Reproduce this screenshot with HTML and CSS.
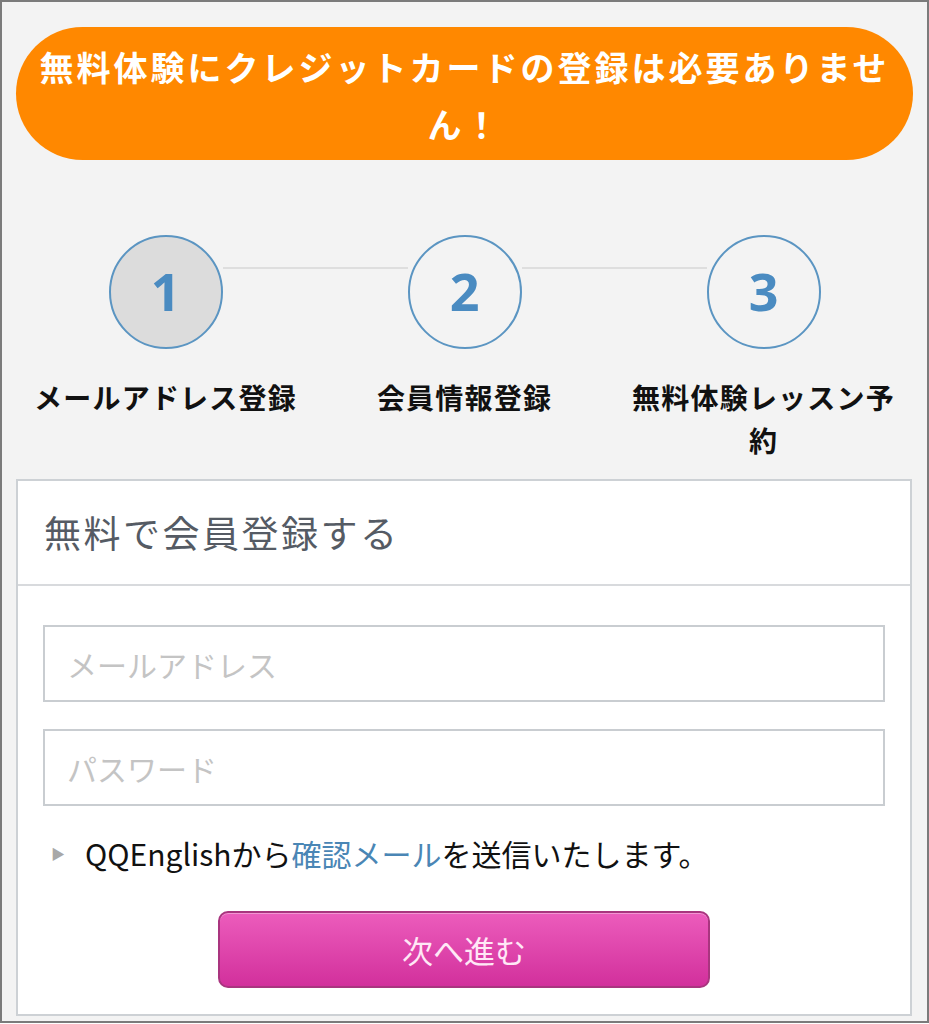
FILE: index.html
```html
<!DOCTYPE html>
<html lang="ja">
<head>
  <meta charset="UTF-8">
  <meta name="viewport" content="width=device-width, initial-scale=1.0">
  <title>無料で会員登録する</title>
  <link rel="stylesheet" href="styles.css">
</head>
<body>
  <div class="frame">
    <div class="banner">無料体験にクレジットカードの登録は必要ありません！</div>

    <!-- 3 step indicator -->
    <div class="steps">
      <div class="step">
        <div class="step-circle current">1</div>
        <div class="step-label">メールアドレス登録</div>
      </div>
      <div class="step">
        <div class="step-circle">2</div>
        <div class="step-label">会員情報登録</div>
      </div>
      <div class="step">
        <div class="step-circle">3</div>
        <div class="step-label">無料体験レッスン予約</div>
      </div>
    </div>

    <div class="card">
      <div class="card-header">無料で会員登録する</div>
      <form class="card-body">
        <input class="field" type="email" placeholder="メールアドレス">
        <input class="field" type="password" placeholder="パスワード">
        <p class="note"><span class="note-mark">▶</span>QQEnglishから<a href="#">確認メール</a>を送信いたします。</p>
        <button class="next-button" type="button">次へ進む</button>
      </form>
    </div>
  </div>
</body>
</html>
```

FILE: styles.css
```css
* {
  box-sizing: border-box;
  margin: 0;
  padding: 0;
}

body {
  background: #fff;
  font-family: "Noto Sans CJK JP", "Noto Sans", sans-serif;
  color: #111;
}

.frame {
  width: 929px;
  height: 1023px;
  overflow: hidden;
  padding: 25px 14px 0;
  background: #f3f3f3;
  border: 2px solid #7b7b7b;
}

.banner {
  padding: 11px 20px 8px;
  background: #ff8800;
  border-radius: 67px;
  color: #fff;
  font-size: 34px;
  font-weight: bold;
  letter-spacing: 3px;
  line-height: 57px;
  text-align: center;
}

.steps {
  display: grid;
  grid-template-columns: repeat(3, 1fr);
  align-items: start;
  margin-top: 75px;
}

.step {
  position: relative;
  padding: 0 8px;
  text-align: center;
}

.step:not(:last-child)::after {
  content: "";
  position: absolute;
  top: 32px;
  left: calc(50% + 57px);
  width: calc(100% - 114px);
  height: 2px;
  background: #dedede;
}

.step-circle {
  width: 114px;
  height: 114px;
  margin: 0 auto;
  border: 2px solid #5b95c2;
  border-radius: 50%;
  color: #4a8bc1;
  font-family: "Open Sans", "Noto Sans", sans-serif;
  font-size: 52px;
  font-weight: bold;
  line-height: 108px;
}

.step-circle.current {
  background: #dcdcdc;
}

.step-label {
  margin-top: 27px;
  font-size: 28px;
  font-weight: bold;
  letter-spacing: 1.2px;
  line-height: 43px;
}

.card {
  margin-top: 17px;
  margin-right: 1px;
  background: #fff;
  border: 2px solid #cdd1d5;
}

.card-header {
  padding: 24px 26px;
  border-bottom: 2px solid #d8dadd;
  color: #555b64;
  font-size: 37px;
  letter-spacing: 2.5px;
  line-height: 55px;
}

.card-body {
  display: flex;
  flex-direction: column;
  padding: 39px 25px 26px;
}

.field {
  height: 77px;
  margin-bottom: 27px;
  padding: 0 22px;
  border: 2px solid #c9cdd1;
  background: #fff;
  font-family: inherit;
  font-size: 30px;
  outline: none;
}

.field::placeholder {
  color: #c4c4c4;
}

.note {
  display: flex;
  align-items: center;
  padding-left: 8px;
  font-size: 30px;
  line-height: 40px;
}

.note-mark {
  margin-right: 20px;
  color: #a8a8a8;
  font-size: 14px;
}

.note a {
  color: #4a86b5;
  text-decoration: none;
}

.next-button {
  align-self: center;
  width: 492px;
  height: 77px;
  margin-top: 38px;
  background: linear-gradient(to bottom, #ec5cbc, #d2309c);
  border: 2px solid #a9357f;
  border-radius: 10px;
  box-shadow: inset 0 1px 0 rgba(255, 255, 255, 0.35);
  color: #ffe8f6;
  font-family: inherit;
  font-size: 31px;
  cursor: pointer;
}
```
